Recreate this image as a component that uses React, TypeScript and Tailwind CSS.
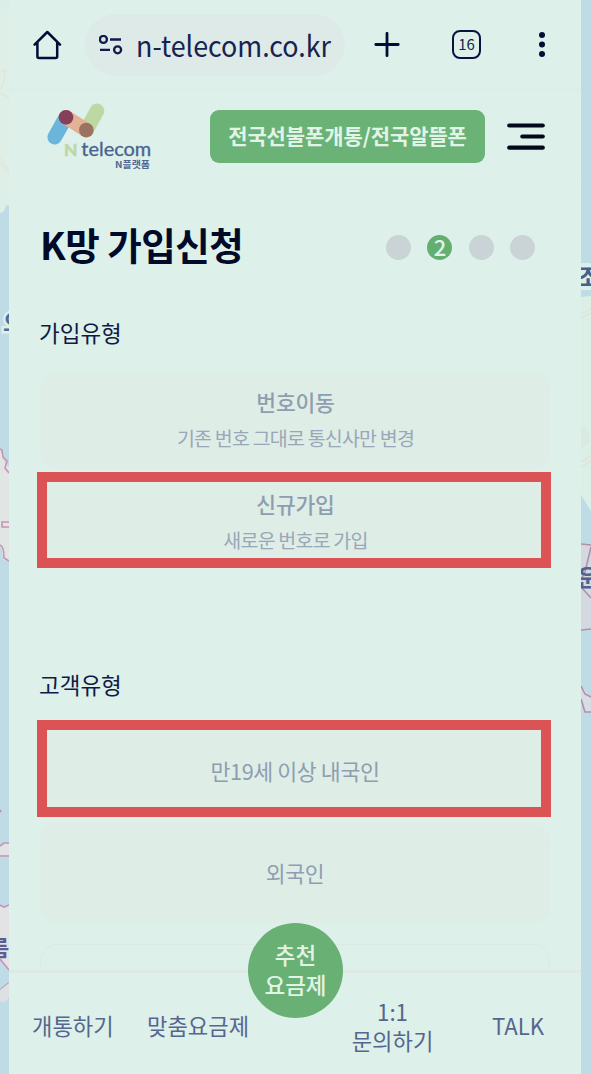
import React from "react";

function MapLeft() {
  return (
    <svg className="h-full w-[9px] shrink-0" viewBox="0 0 9 1074" fill="none">
      <rect width="9" height="1074" fill="#bfdce6" />
      <path d="M0 0H9V206L6 205Q5 212 0 213Z" fill="#ddefe6" />
      <path d="M0 0H9V10H0Z" fill="#dbeeea" />
      <path d="M0 72L5 70L4 81L0 91M0 93L9 98M0 162L9 174M0 158L9 170" stroke="#e6e1cf" />
      <text x="3" y="331" fontSize="23" fontWeight="700" fill="#4f6d96" stroke="#dbf1ea" strokeWidth="5" paintOrder="stroke">으</text>
      <path d="M0 449L4 461L9 467V561L3 560Q2 546 0 545Z" fill="#e1e5e4" />
      <path d="M0 449L2 450L3 457L7 461L5 468L9 473M9 522H2V527H9M0 545Q4 546 4 558L9 561" stroke="#c597b1" strokeWidth="1.6" />
      <path d="M0 846L4 843H9V857H0ZM0 905L9 906V970L0 960Z" fill="#e3e3e5" />
      <path d="M0 846L4 843H9M0 856H9M0 905L4 907L9 905M0 959L9 970M0 990L9 983M0 1001L9 998" stroke="#c393b6" strokeWidth="1.6" />
      <path d="M0 990L9 983V998Q7 1002 0 1002Z" fill="#dfe0e4" />
      <text x="-11" y="956" fontSize="22" fontWeight="700" fill="#595e93">름</text>
      <circle cx="0" cy="811" r="1.5" fill="#bb8fb1" />
    </svg>
  );
}

function MapRight() {
  return (
    <svg className="h-full w-[10px] shrink-0" viewBox="0 0 10 1074" fill="none">
      <rect width="10" height="1074" fill="#bfdce6" />
      <path d="M0 297L10 296V511L0 495Z" fill="#dcefe6" />
      <rect y="263" width="10" height="27" fill="#dbf0ea" />
      <text x="-4" y="286" fontSize="24" fontWeight="700" fill="#45608c">조</text>
      <path d="M0 314L10 309M0 318L10 313M0 462L10 456M0 467L10 461" stroke="#e5ddc9" />
      <path d="M0 425L7 430L9 442L0 449Z" fill="#dae9e1" />
      <path d="M0 544L10 545V630H0Z" fill="#d4d9df" />
      <path d="M0 686L10 697V712H4L0 699Z" fill="#d8dce4" />
      <path d="M0 544L10 545M10 547L4 572L0 580M1 588L10 598M0 630L10 629M0 686L4 694L10 697M0 699L4 712H10" stroke="#b88caf" strokeWidth="1.6" />
      <text x="-4" y="586" fontSize="23" fontWeight="700" fill="#4d6394">운</text>
    </svg>
  );
}

function BrowserBar() {
  return (
    <div className="flex h-[90px] shrink-0 items-center border-b border-[#dcebe3] pl-[24px]">
      <svg className="h-[30px] w-[29px]" viewBox="0 0 29 30" fill="none" stroke="#040b36" strokeWidth="2.5" strokeLinejoin="round" strokeLinecap="round">
        <path d="M1.6 14.6L14.3 2L27 14.6M4.4 12.8V26.5Q4.4 28 6 28H22.6Q24.2 28 24.2 26.5V12.8" />
      </svg>
      <div className="ml-[23px] flex h-[62px] w-[260px] items-center rounded-full bg-[#deeae8] pl-[14px]">
        <svg className="h-[20px] w-[25px]" viewBox="0 0 25 20" fill="none" stroke="#101a4c" strokeWidth="2.3">
          <circle cx="4.4" cy="4.4" r="3.5" />
          <path d="M11 4.5H22M1 14.8H11" />
          <circle cx="18.6" cy="14.8" r="3.5" />
        </svg>
        <span className="ml-[12px] origin-left scale-x-[0.942] whitespace-nowrap text-[28.5px] leading-[36px] text-[#17224f]">n-telecom.co.kr</span>
      </div>
      <svg className="ml-[29px] h-[26px] w-[26px]" viewBox="0 0 26 26" stroke="#040b36" strokeWidth="2.8" strokeLinecap="round">
        <path d="M13 1.3V23.7M1.8 12.5H24.2" />
      </svg>
      <div className="ml-[52px] flex h-[29px] w-[29px] items-center justify-center rounded-[8px] border-[2.5px] border-[#0a123e] pb-[2px] text-[15px] leading-[20px] text-[#17224f]">16</div>
      <svg className="ml-[57px] h-[26px] w-[8px]" viewBox="0 0 8 26" fill="#040b36">
        <circle cx="4" cy="3.1" r="3" />
        <circle cx="4" cy="12.5" r="3" />
        <circle cx="4" cy="22" r="3" />
      </svg>
    </div>
  );
}

function Logo() {
  return (
    <svg className="h-[72px] w-[110px] overflow-visible" viewBox="0 0 110 72" strokeLinecap="round" strokeWidth="14.6">
      <path d="M49 9.8L38.3 29.2" stroke="#bdd8a3" />
      <path d="M18 16.2L6.7 36.2" stroke="#6bb5dc" />
      <path d="M18 16.2L38.3 29.2" stroke="#e3b195" />
      <circle cx="18" cy="16.4" r="7.3" fill="#853f59" />
      <circle cx="38.3" cy="29" r="7.3" fill="#99735f" />
      <text x="16" y="55.2" fontSize="17.5" fontWeight="700" fill="#bdd8a3" stroke="#bdd8a3" strokeWidth=".6" fontFamily="Lato">N</text>
      <text x="33.3" y="55.2" fontSize="18.5" textLength="70" lengthAdjust="spacingAndGlyphs" fill="#4a6290" stroke="#4a6290" strokeWidth=".3" fontFamily="Lato">telecom</text>
      <text x="67" y="66.7" fontSize="9" fontWeight="700" textLength="35" lengthAdjust="spacingAndGlyphs" fill="#536792" stroke="none">N플랫폼</text>
    </svg>
  );
}

function SiteHeader() {
  return (
    <header className="flex h-[94px] shrink-0 items-center border-b border-[#dceee5] pl-[39px]">
      <Logo />
      <button className="ml-[52px] flex h-[53px] w-[275px] items-center justify-center rounded-[9px] bg-[#6ab276] pb-[2px] text-[21px] font-bold tracking-[-0.1px] text-[#e2f4e8]">
        전국선불폰개통/전국알뜰폰
      </button>
      <svg className="ml-[22px] h-[28px] w-[38px]" viewBox="0 0 38 28" stroke="#020819" strokeWidth="4.2" strokeLinecap="round">
        <path d="M2.2 2.5H35.8M15.3 13.5H35.8M2.2 24.7H35.8" />
      </svg>
    </header>
  );
}

function Steps() {
  return (
    <div className="flex gap-[16.3px]">
      {[1, 2, 3, 4].map((n) => (
        <span key={n} className={n === 2 ? "flex size-[25px] items-center justify-center rounded-full bg-[#65ae72] pb-[2px] text-[22px] font-medium leading-[23px] text-[#e2f4e8]" : "size-[25px] rounded-full bg-[#cad3d6]"}>
          {n === 2 ? "2" : ""}
        </span>
      ))}
    </div>
  );
}

export default function App() {
  return (
    <div className="flex h-[1074px] w-[591px] overflow-hidden bg-[#ddf1ea] [font-family:'Noto_Sans_CJK_KR',sans-serif]">
      <MapLeft />
      <main className="flex h-full w-[572px] shrink-0 flex-col">
        <BrowserBar />
        <SiteHeader />
        <section className="h-[786px] shrink-0 overflow-hidden">
          <div className="flex h-[126px] items-center justify-between pl-[31px] pr-[46px]">
            <h1 className="-mt-[5px] whitespace-nowrap text-[37.5px] font-bold tracking-[-0.5px] text-[#020a2a]">K망 가입신청</h1>
            <Steps />
          </div>
          <h2 className="ml-[30px] mt-[6px] h-[32px] text-[22.5px] leading-[32px] text-[#101a45]">가입유형</h2>
          <div className="ml-[31px] mt-[23px] flex h-[99px] w-[510px] flex-col items-center rounded-[17px] bg-[#deede5] pl-px pt-[15px] text-[#8f9db1]">
            <strong className="text-[21.5px] font-medium leading-[32px] tracking-[-0.2px]">번호이동</strong>
            <span className="mt-[4px] text-[19.5px] font-normal leading-[32px] tracking-[-0.8px] text-[#9aa7b8]">기존 번호 그대로 통신사만 변경</span>
          </div>
          <div className="ml-[28px] mt-[2px] flex h-[96px] w-[514px] flex-col items-center border-[10px] border-[#dc5356] bg-[#deede5] pl-[3px] pt-[6px] text-[#8f9db1]">
            <strong className="text-[21.5px] font-medium leading-[32px] tracking-[-0.2px]">신규가입</strong>
            <span className="mt-[4px] text-[19.5px] font-normal leading-[32px] tracking-[-0.8px] text-[#9aa7b8]">새로운 번호로 가입</span>
          </div>
          <h2 className="ml-[30px] mt-[100px] h-[32px] text-[22.5px] leading-[32px] text-[#101a45]">고객유형</h2>
          <div className="ml-[28px] mt-[20px] flex h-[97px] w-[514px] items-center justify-center border-[10px] border-[#dc5356] bg-[#deede5] pl-[2px] pt-[6px] text-[21.7px] tracking-[-0.4px] text-[#8f9db1]">만19세 이상 내국인</div>
          <div className="ml-[31px] mt-[7px] flex h-[99px] w-[510px] items-center justify-center rounded-[17px] bg-[#deede5] text-[21.5px] tracking-[-0.2px] text-[#8f9db1]">외국인</div>
          <div className="ml-[31px] mt-[21px] h-[99px] w-[510px] rounded-[17px] border border-[#dbebe3]" />
        </section>
        <nav className="relative h-[104px] shrink-0 border-t-[3px] border-[#dde9e2] text-[22.2px] text-[#56668e]">
          <div className="flex h-full items-center">
            <span className="ml-[23px] mt-[3px] w-[82px] whitespace-nowrap leading-[30px]">개통하기</span>
            <span className="ml-[33px] mt-[3px] w-[103px] whitespace-nowrap leading-[30px]">맞춤요금제</span>
            <span className="ml-[91px] mt-[4px] w-[103px] text-center leading-[29px]">1:1<br />문의하기</span>
            <span className="ml-[48px] mt-[3px] leading-[30px]">TALK</span>
          </div>
          <button className="absolute left-[239px] top-[-50px] flex size-[95px] items-center justify-center rounded-full bg-[#68b074] pb-[4px] text-[22.5px] font-medium leading-[30px] text-[#e2f4e8]">
            <span>추천<br />요금제</span>
          </button>
        </nav>
      </main>
      <MapRight />
    </div>
  );
}
